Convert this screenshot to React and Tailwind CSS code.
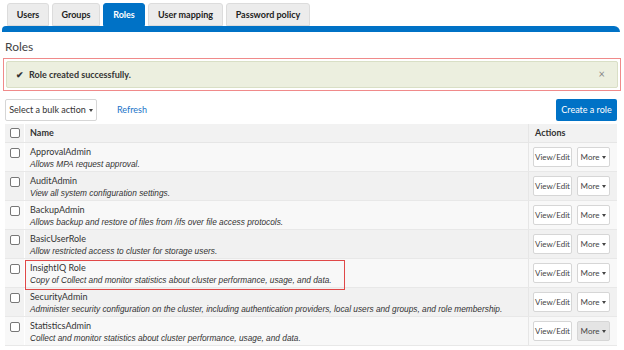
import React from 'react';

const roles = [
  { name: 'ApprovalAdmin', desc: 'Allows MPA request approval.' },
  { name: 'AuditAdmin', desc: 'View all system configuration settings.' },
  { name: 'BackupAdmin', desc: 'Allows backup and restore of files from /ifs over file access protocols.' },
  { name: 'BasicUserRole', desc: 'Allow restricted access to cluster for storage users.' },
  { name: 'InsightIQ Role', desc: 'Copy of Collect and monitor statistics about cluster performance, usage, and data.', highlight: true },
  { name: 'SecurityAdmin', desc: 'Administer security configuration on the cluster, including authentication providers, local users and groups, and role membership.' },
  { name: 'StatisticsAdmin', desc: 'Collect and monitor statistics about cluster performance, usage, and data.', hover: true },
];

const tabs = [
  { label: 'Users', w: 'w-[42px]' },
  { label: 'Groups', w: 'w-[48px]' },
  { label: 'Roles', w: 'w-[42px]' },
  { label: 'User mapping', w: 'w-[75px]' },
  { label: 'Password policy', w: 'w-[84px]' },
];

function Caret() {
  return <span className="inline-block ml-[3px] align-middle border-x-[2.5px] border-x-transparent border-t-[3px] border-t-[#444]" />;
}

function Checkbox() {
  return <span className="block w-[10px] h-[10px] border border-[#777] rounded-[2px] bg-white" />;
}

export default function App() {
  return (
    <div className="w-[624px] h-[350px] bg-white overflow-hidden font-['Lato',sans-serif] text-[#333]">
      {/* tabs */}
      <div className="flex gap-[3px] pl-[7px] pt-[3px]">
        {tabs.map(t => (
          <div
            key={t.label}
            className={
              t.w + ' h-[23px] flex items-center justify-center whitespace-nowrap text-[9px] font-bold rounded-t-[3px] border ' +
              (t.label === 'Roles'
                ? 'bg-[#0072c6] border-[#0072c6] text-white'
                : 'bg-[#ececec] border-[#dcdcdc] text-[#222]')
            }
          >
            {t.label}
          </div>
        ))}
      </div>
      <div className="ml-[2px] mr-[4px] h-[6px] bg-[#0072c6] rounded-tl-[4px] rounded-tr-[6px]" />

      <div className="px-[5px]">
        <div className="pt-[6px] text-[12px] text-[#444] leading-[18px]">Roles</div>

        {/* alert */}
        <div className="mt-[2px] -mx-[2px] border border-[#f08a8a] p-[2px]">
          <div className="h-[27px] flex items-center bg-[#ecefdf] border border-[#d9dfc6] rounded-[2px] px-[9px] text-[9px] font-bold text-[#333]">
            <span className="text-[9px] mr-[5px]">✔</span>
            <span className="flex-1">Role created successfully.</span>
            <span className="text-[#888] text-[11px] font-normal mr-[3px]">×</span>
          </div>
        </div>

        {/* toolbar */}
        <div className="mt-[8px] flex items-center">
          <div className="h-[22px] w-[92px] flex items-center justify-center whitespace-nowrap border border-[#d6d6d6] rounded-[2px] text-[9px] text-[#333]">
            Select a bulk action<Caret />
          </div>
          <span className="ml-[20px] text-[9px] text-[#1a73c8]">Refresh</span>
          <div className="ml-auto mr-[2px] h-[22px] w-[61px] flex items-center justify-center whitespace-nowrap bg-[#0072c6] text-white text-[9px] rounded-[2px]">
            Create a role
          </div>
        </div>

        {/* table */}
        <div className="mt-[3px] mr-[2px] text-[9px]">
          <div className="flex h-[19px] bg-[#f2f2f2] font-bold items-center border-b border-[#e6e6e6]">
            <div className="w-[20px] flex justify-center border-r border-white self-stretch items-center"><Checkbox /></div>
            <div className="flex-1 pl-[5px]">Name</div>
            <div className="w-[89px] pl-[6px] border-l border-[#e6e6e6] self-stretch flex items-center">Actions</div>
          </div>
          {roles.map((r, i) => (
            <div
              key={r.name}
              className={'flex h-[29px] border-b border-[#e8e8e8] ' + (i % 2 === 0 ? 'bg-[#f8f8f8]' : 'bg-[#f1f1f1]')}
            >
              <div className="w-[20px] flex justify-center pt-[5px] border-r border-white"><Checkbox /></div>
              <div className="relative flex-1 min-w-0 pl-[5px] pt-[3px]">
                {r.highlight && (
                  <div className="absolute left-0 top-[1px] w-[320px] h-[30px] border border-[#e04848] pointer-events-none" />
                )}
                <div className="leading-[12px] text-[9px] text-[#333] whitespace-nowrap">{r.name}</div>
                <div className="leading-[12px] text-[8.3px] italic text-[#333] whitespace-nowrap font-['Liberation_Sans',sans-serif]">{r.desc}</div>
              </div>
              <div className="w-[89px] shrink-0 border-l border-[#e6e6e6] flex gap-[5px] pl-[4px] pt-[4px]">
                <div className="h-[20px] w-[39px] flex items-center justify-center whitespace-nowrap bg-white border border-[#d6d6d6] rounded-[2px] text-[8px] text-[#444]">View/Edit</div>
                <div className={'h-[20px] w-[33px] flex items-center justify-center whitespace-nowrap border border-[#d6d6d6] rounded-[2px] text-[8px] text-[#444] ' + (r.hover ? 'bg-[#e4e4e4]' : 'bg-white')}>
                  More<Caret />
                </div>
              </div>
            </div>
          ))}
        </div>
      </div>
    </div>
  );
}
